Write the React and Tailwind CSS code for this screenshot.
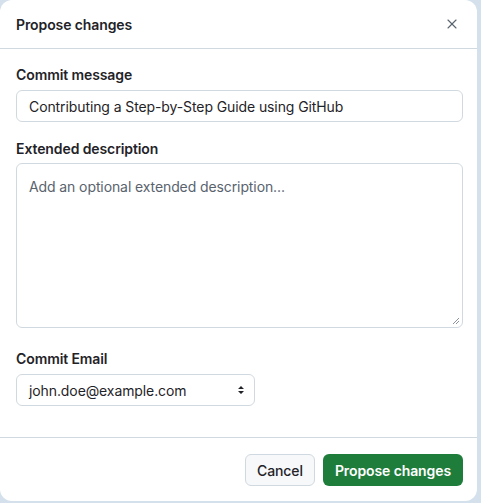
import { X } from "lucide-react";

export default function App() {
  return (
    <div className="h-[503px] w-[481px] overflow-hidden bg-[#d4e0ec] font-['Inter',sans-serif] text-[#1f2328]">
      <div className="flex h-[501px] w-[477px] flex-col rounded-[12px] bg-white">
        <div className="flex h-[49px] items-center justify-between border-b border-[#d1d9e0] pl-4 pr-[17px]">
          <h2 className="text-[14px] font-semibold tracking-[-0.1px]">Propose changes</h2>
          <X size={16} strokeWidth={1.6} className="text-[#59636e]" />
        </div>

        <div className="flex flex-1 flex-col px-4 pt-[16px] tracking-[-0.1px]">
          <label className="text-[14px] font-semibold leading-5">Commit message</label>
          <div className="mt-[5px] flex h-8 w-[447px] items-center rounded-md border border-[#d1d9e0] px-3 text-[14px]">
            Contributing a Step-by-Step Guide using GitHub
          </div>

          <label className="mt-[17px] text-[14px] font-semibold leading-5">Extended description</label>
          <div className="relative mt-[4px] h-[165px] w-[447px] rounded-md border border-[#d1d9e0] px-3 pt-[12px] text-[14px] text-[#59636e]">
            Add an optional extended description...
            <svg className="absolute bottom-[2px] right-[2px]" width="8" height="8" viewBox="0 0 8 8">
              <path d="M7 1L1 7M7 4L4 7" stroke="#8c959f" strokeWidth="1" />
            </svg>
          </div>

          <label className="mt-[21px] text-[14px] font-semibold leading-5">Commit Email</label>
          <div className="mt-[5px] flex h-8 w-[239px] items-center justify-between rounded-md border border-[#d1d9e0] pl-3 pr-[9px] text-[14px]">
            <span>john.doe@example.com</span>
            <svg width="8" height="10" viewBox="0 0 8 10">
              <path d="M4 1L7 4H1z M4 9L1 6H7z" fill="#1f2328" />
            </svg>
          </div>
        </div>

        <div className="flex h-[64px] items-center justify-end gap-2 border-t border-[#d1d9e0] pr-[14px] pt-[1px] tracking-[-0.1px]">
          <button className="h-8 rounded-md border border-[#d1d9e0] bg-[#f6f8fa] px-[11px] text-[14px] font-medium">
            Cancel
          </button>
          <button className="h-8 rounded-md bg-[#1f7d3c] px-3 text-[14px] font-semibold text-white">
            Propose changes
          </button>
        </div>
      </div>
    </div>
  );
}
